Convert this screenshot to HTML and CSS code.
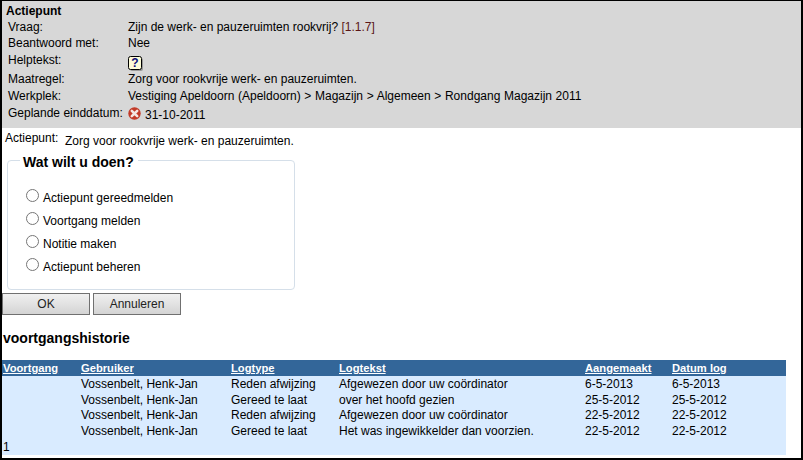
FILE: index.html
```html
<!DOCTYPE html>
<html lang="nl">
<head>
    <meta charset="UTF-8">
    <title>Actiepunt</title>
    <link rel="stylesheet" href="styles.css">
</head>
<body>
    <div class="frame">
        <div class="summary">
            <div class="summary-title">Actiepunt</div>
            <div class="summary-row row-a">
                <span class="summary-label">Vraag:</span>
                <span>Zijn de werk- en pauzeruimten rookvrij? <span class="ref">[1.1.7]</span></span>
            </div>
            <div class="summary-row row-b">
                <span class="summary-label">Beantwoord met:</span>
                <span>Nee</span>
            </div>
            <div class="summary-row row-c">
                <span class="summary-label">Helptekst:</span>
                <svg class="help-icon" width="15" height="15" viewBox="0 0 15 15">
                    <rect x="2" y="2" width="13" height="13" rx="2" fill="#9a9a9a"/>
                    <rect x="0.5" y="0.5" width="13" height="13" rx="2" fill="#fdfcd8" stroke="#000"/>
                    <text x="7" y="11" text-anchor="middle" class="help-mark">?</text>
                </svg>
            </div>
            <div class="summary-row row-d">
                <span class="summary-label">Maatregel:</span>
                <span>Zorg voor rookvrije werk- en pauzeruimten.</span>
            </div>
            <div class="summary-row row-e">
                <span class="summary-label">Werkplek:</span>
                <span class="path">Vestiging Apeldoorn (Apeldoorn) &gt; Magazijn &gt; Algemeen &gt; Rondgang Magazijn 2011</span>
            </div>
            <div class="summary-row row-f">
                <span class="summary-label">Geplande einddatum:</span>
                <span class="late">
                    <svg class="late-icon" width="13" height="13" viewBox="0 0 13 13">
                        <circle cx="6.5" cy="6.5" r="6.2" fill="#c23a28"/>
                        <path d="M3.8 3.8l5.4 5.4M9.2 3.8l-5.4 5.4" stroke="#f4e6e2" stroke-width="2.6" stroke-linecap="round"/>
                    </svg>
                    <span class="late-date">31-10-2011</span>
                </span>
            </div>
        </div>

        <div class="action-line">
            <span class="action-label">Actiepunt:</span>
            <span class="action-text">Zorg voor rookvrije werk- en pauzeruimten.</span>
        </div>

        <fieldset class="choices">
            <legend>Wat wilt u doen?</legend>
            <label class="choice"><input type="radio" name="keuze"><span>Actiepunt gereedmelden</span></label>
            <label class="choice"><input type="radio" name="keuze"><span>Voortgang melden</span></label>
            <label class="choice"><input type="radio" name="keuze"><span>Notitie maken</span></label>
            <label class="choice"><input type="radio" name="keuze"><span>Actiepunt beheren</span></label>
        </fieldset>

        <div class="buttons">
            <button type="button">OK</button>
            <button type="button">Annuleren</button>
        </div>

        <h2>voortgangshistorie</h2>

        <table class="history">
            <thead>
                <tr>
                    <th class="col-progress"><a href="#">Voortgang</a></th>
                    <th class="col-user"><a href="#">Gebruiker</a></th>
                    <th class="col-type"><a href="#">Logtype</a></th>
                    <th class="col-text"><a href="#">Logtekst</a></th>
                    <th class="col-made"><a href="#">Aangemaakt</a></th>
                    <th><a href="#">Datum log</a></th>
                </tr>
            </thead>
            <tbody>
                <tr>
                    <td></td>
                    <td>Vossenbelt, Henk-Jan</td>
                    <td>Reden afwijzing</td>
                    <td>Afgewezen door uw coördinator</td>
                    <td>6-5-2013</td>
                    <td>6-5-2013</td>
                </tr>
                <tr class="row-short">
                    <td></td>
                    <td>Vossenbelt, Henk-Jan</td>
                    <td>Gereed te laat</td>
                    <td>over het hoofd gezien</td>
                    <td>25-5-2012</td>
                    <td>25-5-2012</td>
                </tr>
                <tr>
                    <td></td>
                    <td>Vossenbelt, Henk-Jan</td>
                    <td>Reden afwijzing</td>
                    <td>Afgewezen door uw coördinator</td>
                    <td>22-5-2012</td>
                    <td>22-5-2012</td>
                </tr>
                <tr>
                    <td></td>
                    <td>Vossenbelt, Henk-Jan</td>
                    <td>Gereed te laat</td>
                    <td>Het was ingewikkelder dan voorzien.</td>
                    <td>22-5-2012</td>
                    <td>22-5-2012</td>
                </tr>
                <tr>
                    <td colspan="6">1</td>
                </tr>
            </tbody>
        </table>
    </div>
</body>
</html>
```

FILE: styles.css
```css
html, body {
    margin: 0;
    padding: 0;
}

body {
    font-family: "Liberation Sans", Arial, sans-serif;
    font-size: 12px;
    color: #000;
    background: #fff;
}

/* Black window edge around the whole page */
.frame {
    box-sizing: border-box;
    width: 803px;
    height: 460px;
    border: 2px solid #000;
    border-top-width: 1px;
    overflow: hidden;
}

.summary {
    box-sizing: border-box;
    height: 127px;
    padding: 3px 4px 0;
    background: #d7d7d7;
}

.summary-title {
    font-weight: bold;
    line-height: 14px;
    margin-bottom: 2px;
}

.summary-row {
    display: flex;
    padding-left: 2px;
    line-height: 14px;
}

.row-a { height: 16px; }
.row-b { height: 17px; }
.row-c { height: 19px; }
.row-d { height: 17px; }
.row-e { height: 17px; }

.summary-label {
    width: 120px;
    flex-shrink: 0;
}

.ref {
    color: #5a1616;
}

.path {
    word-spacing: 0.3px;
}

.help-icon {
    margin-top: 3px;
}

.help-mark {
    font-family: "Liberation Sans", Arial, sans-serif;
    font-size: 12px;
    font-weight: bold;
    fill: #10107a;
}

.late {
    display: flex;
    align-items: flex-start;
    gap: 4px;
}

.late-icon {
    margin-top: 1px;
}

.late-date {
    padding-top: 2px;
}

.action-line {
    display: flex;
    padding: 3px 0 0 3px;
    line-height: 14px;
}

.action-label {
    width: 60px;
}

.action-text {
    margin-top: 3px;
}

.choices {
    box-sizing: border-box;
    width: 288px;
    height: 140px;
    margin: 2px 0 0 5px;
    padding: 19px 0 0 8px;
    border: 1px solid #d5dfe9;
    border-radius: 4px;
}

.choices legend {
    font-size: 14px;
    font-weight: bold;
    padding: 4px 4px 0 3px;
    margin-left: 4px;
}

.choice {
    display: flex;
    align-items: flex-start;
    height: 23px;
    padding-left: 10px;
    line-height: 15px;
}

.choice input {
    width: 13px;
    height: 13px;
    margin: 0 4px 0 0;
}

.choice span {
    padding-top: 2px;
}

.buttons {
    display: flex;
    gap: 3px;
    margin: 3px 0 0 0;
}

.buttons button {
    width: 88px;
    height: 22px;
    padding: 0;
    font-family: inherit;
    font-size: 12px;
    color: #222;
    border: 1px solid #707070;
    background: linear-gradient(#f0f0f0, #d4d4d4);
}

h2 {
    font-size: 14px;
    line-height: 16px;
    margin: 15px 0 0 1px;
}

.history {
    width: 784px;
    margin: 14px 0 0 0;
    border-collapse: collapse;
    background: #d9ebff;
    table-layout: fixed;
}

.history th {
    height: 16px;
    padding: 0 0 0 1px;
    text-align: left;
    background: #336699;
    font-size: 11.2px;
    font-weight: bold;
    line-height: 14px;
}

.history th a {
    color: #fff;
}

.col-progress { width: 77px; }
.col-user { width: 149px; }
.col-type { width: 107px; }
.col-text { width: 245px; }
.col-made { width: 86px; }

.history td {
    height: 16px;
    padding: 0 0 0 1px;
    line-height: 14px;
}

.history .row-short td {
    height: 15px;
}
```
